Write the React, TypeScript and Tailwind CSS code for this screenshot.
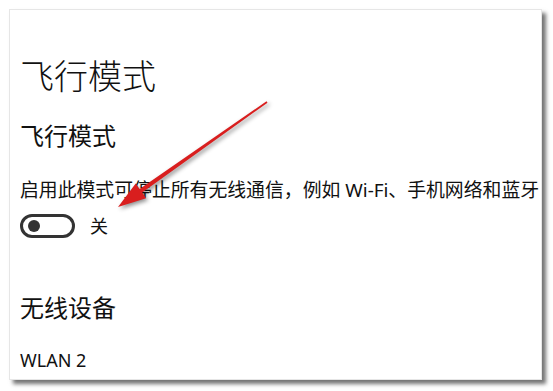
const font = "font-['Noto_Sans','Noto_Sans_CJK_SC',sans-serif]";

const Toggle = ({ on }: { on: boolean }) => (
  <div className="flex items-center">
    <div className="w-[55px] h-[24px] rounded-full border-[3px] border-[#333] flex items-center px-[5px]">
      <span className={`w-[12px] h-[12px] rounded-full bg-[#333] ${on ? "ml-auto" : ""}`} />
    </div>
    <span className="ml-[15px] text-[18px] leading-[24px] text-[#111]">{on ? "开" : "关"}</span>
  </div>
);

const App = () => {
  return (
    <div className={`relative w-[553px] h-[391px] bg-white overflow-hidden ${font}`}>
      <div className="ml-[9px] mt-[9px] w-[533px] h-[371px] bg-white border border-[#e6e6e6] shadow-[4px_4px_4px_rgba(0,0,0,0.55)] pl-[10px] pt-[44px] text-[#111]">
        <h1 className="text-[34px] leading-[44px] font-light">飞行模式</h1>
        <h2 className="mt-[22px] text-[24px] leading-[32px] font-normal">飞行模式</h2>
        <p className="mt-[24px] text-[18.85px] leading-[28px] whitespace-nowrap">
          启用此模式可停止所有无线通信，例如 Wi-Fi、手机网络和蓝牙
        </p>
        <div className="mt-[10px]">
          <Toggle on={false} />
        </div>
        <h2 className="mt-[54px] text-[24px] leading-[32px] font-normal">无线设备</h2>
        <p className="mt-[24px] text-[18px] leading-[24px]">WLAN 2</p>
      </div>

      {/* red annotation arrow */}
      <svg
        className="absolute left-0 top-0 drop-shadow-[2px_2px_2px_rgba(0,0,0,0.45)]"
        width="553"
        height="391"
        viewBox="0 0 553 391"
      >
        <polygon
          fill="#d91e1e"
          points="266.5,101.3 267.5,102.7 142.2,192.6 146.1,198.2 118,207 135.7,183.4 139.6,189.0"
        />
      </svg>
    </div>
  );
};

export default App;
